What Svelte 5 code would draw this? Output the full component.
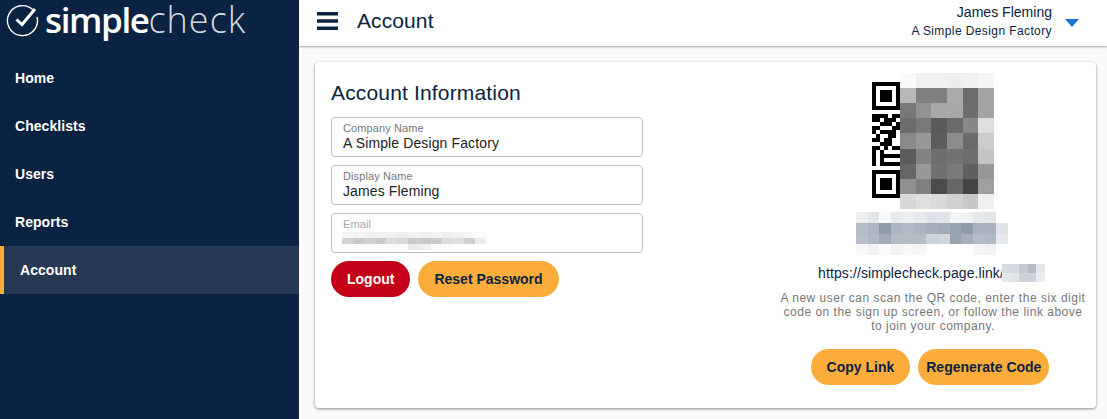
<script lang="ts">
	const navItems = ['Home', 'Checklists', 'Users', 'Reports', 'Account'];
	const activeItem = 'Account';

	// pixelated (redacted) parts of the page, as rows of grey values
	const qrMosaic = [
		['#fafafa', '#f0f0f0', '#f0f0f0', '#eeeeee', '#f0f0f0', '#f5f5f5'],
		['#b8b8b8', '#808080', '#808080', '#aaaaaa', '#6c6c6c', '#a4a4a4'],
		['#787878', '#929292', '#a8a8a8', '#a8a8a8', '#6e6e6e', '#a4a4a4'],
		['#6c6c6c', '#787878', '#5a5a5a', '#6a6a6a', '#888888', '#dedede'],
		['#8a8a8a', '#989898', '#5c5c5c', '#8c8c8c', '#6a6a6a', '#cccccc'],
		['#5c5c5c', '#828282', '#6e6e6e', '#727272', '#6e6e6e', '#c4c4c4'],
		['#666666', '#989898', '#707070', '#7a7a7a', '#606060', '#989898'],
		['#909090', '#808080', '#4a4c4c', '#666666', '#444444', '#a0a0a0'],
		['#d8d8d8', '#dfdfdf', '#dadada', '#d0d0d0', '#c8c8c8', '#efefef']
	];
	const codeMosaic = [
		['#eceef0', '#e2e5e9', '#f8f9fa', '#e6e9ed', '#eceef0', '#e6e9ed', '#dfe2e7', '#dfe2e7', '#f3f4f5', '#f1f2f4', '#e6e8ec', '#e2e5e9', '#ffffff'],
		['#b4bcc6', '#adb5c0', '#8e9bab', '#adb5c0', '#b2bac4', '#adb5c0', '#a6afbb', '#a2abb8', '#98a3b1', '#8d9aab', '#a8b1bc', '#a8b1bc', '#dfe2e7'],
		['#b8bfc9', '#b0b8c3', '#a2abb8', '#b4bcc6', '#b4bcc6', '#b4bcc6', '#cdd1d9', '#d2d6dd', '#98a3b1', '#a6afbb', '#b4bcc6', '#b0b8c3', '#e6e8ec'],
		['#f8f8f9', '#f1f2f4', '#fcfcfc', '#f1f2f4', '#f8f8f9', '#f6f6f7', '#ffffff', '#ffffff', '#ffffff', '#ffffff', '#f4f5f6', '#f1f2f4', '#ffffff']
	];
	const linkMosaic = [
		['#d6dae0', '#d6dae0', '#c4c9d2', '#b4bac6', '#e4e6ea'],
		['#e4e6ea', '#e0e3e7', '#cdd1d9', '#cdd1d9', '#e8eaed']
	];
	const emailMosaic = [
		['#f6f6f6', '#f4f4f4', '#f1f1f1', '#f3f3f3', '#f1f1f1', '#eeeeee', '#f3f3f3', '#f0f0f0', '#f4f4f4', '#f0f0f0', '#f3f3f3', '#f6f6f6', '#fafafa'],
		['#d4d4d4', '#cacaca', '#d2d2d2', '#cccccc', '#dcdcdc', '#d8d8d8', '#cbcbcb', '#c8c8c8', '#cccccc', '#dedede', '#e0e0e0', '#d0d0d0', '#ececec'],
		['#fbfbfb', '#fcfcfc', '#fbfbfb', '#fdfdfd', '#fbfbfb', '#fbfbfb', '#ececec', '#f0f0f0', '#fcfcfc', '#fdfdfd', '#ffffff', '#ffffff', '#ffffff']
	];

	// data modules of the visible QR column, 7 wide
	const qrData = [
		'1111011', '1101110', '0011101', '1100011', '1011110', '0100110', '1101100',
		'0011100', '1101011', '1010000', '1011111', '1010000', '1011111'
	];
</script>

<div class="shell">
	<aside class="sidebar">
		<div class="logo">
			<svg class="logo-mark" viewBox="0 0 34 34" width="34" height="34" aria-hidden="true">
				<path d="M27.5 7.5A15 15 0 1 0 31 14" fill="none" stroke="#fff" stroke-width="1.4" />
				<path d="M10.5 16.5l5.5 5L29 6" fill="none" stroke="#fff" stroke-width="3" />
			</svg>
			<span class="logo-text"><b>simple</b><span>check</span></span>
		</div>
		<nav>
			{#each navItems as item}
				<div class="nav-item" class:active={item === activeItem}>{item}</div>
			{/each}
		</nav>
	</aside>

	<div class="main">
		<header class="topbar">
			<svg class="menu-icon" viewBox="0 0 22 20" width="22" height="20" aria-hidden="true">
				<path d="M0 2.7h21M0 10h21M0 17.3h21" stroke="#0a2342" stroke-width="3.6" />
			</svg>
			<h1>Account</h1>
			<div class="user">
				<div class="user-name">James Fleming</div>
				<div class="user-company">A Simple Design Factory</div>
			</div>
			<div class="caret"></div>
		</header>

		<section class="card">
			<div class="info">
				<h2>Account Information</h2>
				<div class="field">
					<div class="field-label">Company Name</div>
					<div class="field-value">A Simple Design Factory</div>
				</div>
				<div class="field">
					<div class="field-label">Display Name</div>
					<div class="field-value">James Fleming</div>
				</div>
				<div class="field disabled">
					<div class="field-label">Email</div>
					<div class="mosaic email-mosaic">
						{#each emailMosaic as row}
							<div class="mosaic-row">
								{#each row as c}<span style="background: {c}"></span>{/each}
							</div>
						{/each}
					</div>
				</div>
				<div class="actions">
					<button class="btn danger">Logout</button>
					<button class="btn">Reset Password</button>
				</div>
			</div>

			<div class="invite">
				<div class="qr">
					<div class="qr-column">
						<div class="finder"></div>
						<div class="qr-data">
							{#each qrData as row}
								{#each row.split('') as bit}
									<span class:on={bit === '1'}></span>
								{/each}
							{/each}
						</div>
						<div class="finder"></div>
					</div>
					<div class="mosaic qr-mosaic">
						{#each qrMosaic as row}
							<div class="mosaic-row">
								{#each row as c}<span style="background: {c}"></span>{/each}
							</div>
						{/each}
					</div>
				</div>
				<div class="mosaic code-mosaic">
					{#each codeMosaic as row}
						<div class="mosaic-row">
							{#each row as c}<span style="background: {c}"></span>{/each}
						</div>
					{/each}
				</div>
				<div class="link">
					<span>https://simplecheck.page.link/</span>
					<div class="mosaic link-mosaic">
						{#each linkMosaic as row}
							<div class="mosaic-row">
								{#each row as c}<span style="background: {c}"></span>{/each}
							</div>
						{/each}
					</div>
				</div>
				<p class="hint">
					A new user can scan the QR code, enter the six digit code on the sign up screen, or follow
					the link above to join your company.
				</p>
				<div class="actions centered">
					<button class="btn">Copy Link</button>
					<button class="btn tight">Regenerate Code</button>
				</div>
			</div>
		</section>
	</div>
</div>

<style>
	:global(body) {
		font-family: 'Liberation Sans', Arial, sans-serif;
		overflow: hidden;
	}
	.shell {
		display: flex;
		height: 419px;
		background: #fafafa;
		color: #0a2342;
	}
	.sidebar {
		width: 299px;
		flex: none;
		background: #0a2342;
		color: #fff;
	}
	.logo {
		display: flex;
		align-items: center;
		gap: 5px;
		height: 54px;
		padding: 0 0 14px 6px;
		box-sizing: border-box;
	}
	.logo-text {
		font-family: 'Open Sans', sans-serif;
		font-size: 35px;
		line-height: 40px;
	}
	.logo-text b {
		font-weight: 600;
		letter-spacing: -1.4px;
	}
	.logo-text span {
		font-size: 36px;
		font-weight: 300;
		color: #d5d9df;
		letter-spacing: 1px;
	}
	.nav-item {
		display: flex;
		align-items: center;
		height: 48px;
		padding-left: 15px;
		font-size: 14px;
		font-weight: 700;
		letter-spacing: 0.05px;
	}
	.nav-item.active {
		background: #263954;
		border-left: 4px solid #fcac3a;
		padding-left: 16px;
	}
	.main {
		flex: 1;
		min-width: 0;
	}
	.topbar {
		display: flex;
		align-items: center;
		height: 46px;
		box-sizing: border-box;
		padding: 0 28px 4px 18px;
		background: #fff;
		box-shadow: 0 1px 2px rgba(0, 0, 0, 0.35);
	}
	h1 {
		margin: 0 0 0 18px;
		font-size: 21px;
		font-weight: 400;
		letter-spacing: 0.1px;
	}
	.user {
		margin-left: auto;
		text-align: right;
	}
	.user-name {
		font-size: 14px;
		line-height: 19px;
		letter-spacing: 0.02px;
	}
	.user-company {
		font-size: 12px;
		line-height: 18px;
		letter-spacing: 0.4px;
	}
	.caret {
		width: 0;
		height: 0;
		margin: 4px 0 0 13px;
		border-left: 7px solid transparent;
		border-right: 7px solid transparent;
		border-top: 8px solid #1f76d8;
	}
	.card {
		display: flex;
		justify-content: space-between;
		height: 346px;
		box-sizing: border-box;
		margin: 16px 11px 0 16px;
		padding: 16px 8px 0 16px;
		background: #fff;
		border-radius: 4px;
		box-shadow: 0 1px 3px rgba(0, 0, 0, 0.45);
	}
	.info {
		width: 312px;
	}
	h2 {
		margin: 2px 0 12px;
		font-size: 21px;
		line-height: 25px;
		font-weight: 400;
		letter-spacing: 0.16px;
	}
	.field {
		height: 40px;
		box-sizing: border-box;
		margin-bottom: 8px;
		padding: 4px 11px 0;
		border: 1px solid #bdbdbd;
		border-radius: 4px;
	}
	.field-label {
		font-size: 11px;
		line-height: 13px;
		letter-spacing: 0.1px;
		color: #777;
	}
	.disabled .field-label {
		color: #a8a8a8;
	}
	.field-value {
		font-size: 14px;
		line-height: 16px;
		color: #222;
		letter-spacing: 0.12px;
	}
	.actions {
		display: flex;
		gap: 8px;
	}
	.actions.centered {
		justify-content: center;
		margin: 16px 6px 0 0;
	}
	.btn {
		height: 36px;
		padding: 0 16px;
		border: none;
		border-radius: 18px;
		background: #fcac3a;
		color: #0a2342;
		font-family: inherit;
		font-size: 14px;
		font-weight: 700;
		letter-spacing: 0;
	}
	.btn.tight {
		padding: 0 8px;
	}
	.btn.danger {
		background: #c40018;
		color: #fff;
	}
	.invite {
		width: 310px;
		display: flex;
		flex-direction: column;
		align-items: center;
	}
	.qr {
		display: flex;
		margin: -5px 0 3px;
		width: 122px;
	}
	.qr-column {
		width: 28px;
		padding-top: 9px;
	}
	.finder {
		width: 20px;
		height: 20px;
		border: 4px solid #000;
		background: linear-gradient(#000, #000) center / 12px 12px no-repeat #fff;
	}
	.qr-data {
		display: grid;
		grid-template-columns: repeat(7, 4px);
		grid-auto-rows: 4px;
		padding: 4px 0;
	}
	.qr-data span.on {
		background: #000;
	}
	.mosaic {
		display: flex;
		flex-direction: column;
	}
	.mosaic-row {
		display: flex;
		flex: 1;
	}
	.mosaic-row span {
		flex: 1;
	}
	.qr-mosaic {
		width: 94px;
		height: 136px;
	}
	.code-mosaic {
		width: 152px;
		height: 43px;
		margin-right: 2px;
	}
	.link {
		display: flex;
		align-items: center;
		margin: 9px 3px 0 0;
		font-size: 14px;
		letter-spacing: 0.1px;
	}
	.link-mosaic {
		width: 43px;
		height: 18px;
		margin-left: -2px;
	}
	.email-mosaic {
		width: 144px;
		height: 18px;
		margin: 1px 0 0 -1px;
		filter: blur(0.5px);
	}
	.hint {
		margin: 9px 0 0;
		width: 310px;
		text-align: center;
		font-size: 12px;
		line-height: 14px;
		letter-spacing: 0.5px;
		color: #777;
	}
</style>
